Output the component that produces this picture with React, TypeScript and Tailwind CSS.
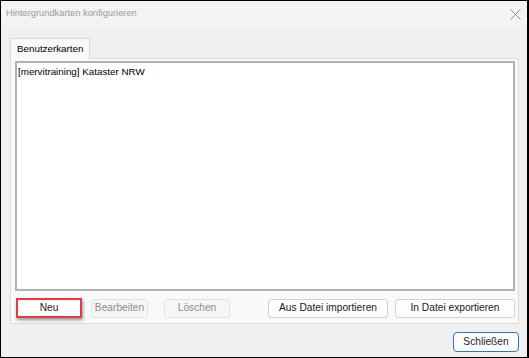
const font = { fontFamily: '"Liberation Sans", Arial, sans-serif' };

function Btn({
  label,
  w,
  disabled = false,
}: {
  label: string;
  w: string;
  disabled?: boolean;
}) {
  return (
    <div
      className={`${w} h-[19px] flex items-center justify-center rounded-[3px] border text-[10.2px] ${
        disabled
          ? "border-[#e2e2e2] bg-[#f6f6f6] text-[#8c8c8c]"
          : "border-[#d2d2d2] bg-[#fdfdfd] text-[#1b1b1b]"
      }`}
    >
      {label}
    </div>
  );
}

export default function App() {
  return (
    <div
      className="w-[529px] h-[358px] border border-black border-r-2 bg-[#f0f0f0] flex flex-col"
      style={font}
    >
      {/* title bar */}
      <div className="h-[26px] bg-[#f3f3f3] flex items-center justify-between pl-[5px] pr-[5px]">
        <span className="text-[9.3px] text-[#9b9b9b]">Hintergrundkarten konfigurieren</span>
        <svg width="11" height="11" viewBox="0 0 11 11" className="mr-[1px]">
          <path d="M0.5 0.5 L10.5 10.5 M10.5 0.5 L0.5 10.5" stroke="#8d8d8d" strokeWidth="1" />
        </svg>
      </div>

      {/* tab control */}
      <div className="pl-[9px] pt-[11px] pr-[8px]">
        <div className="relative z-10 -mb-px w-[80px] h-[21px] bg-[#f9f9f9] border border-b-0 border-[#d9d9d9] flex items-center pl-[6px] text-[9.8px] text-black">
          Benutzerkarten
        </div>
        <div className="h-[266px] border border-[#dcdcdc] bg-[#f9f9f9] pl-[4px] pr-[3px] pt-[2px] flex flex-col">
          <div className="h-[230px] bg-white border-2 border-[#b2b2b2] pl-[1px] pt-[2px] text-[9.8px] text-black leading-[13px]">
            [mervitraining] Kataster NRW
          </div>
          <div className="flex items-center mt-[7px] pl-[1px]">
            <div className="w-[66px] h-[20px] flex items-center justify-center border-2 border-[#e8393f] bg-white shadow-[1px_2px_3px_rgba(0,0,0,0.4)] text-[10.2px] text-[#1b1b1b]">
              Neu
            </div>
            <div className="ml-[9px]">
              <Btn label="Bearbeiten" w="w-[57px]" disabled />
            </div>
            <div className="ml-[16px]">
              <Btn label="Löschen" w="w-[66px]" disabled />
            </div>
            <div className="ml-auto">
              <Btn label="Aus Datei importieren" w="w-[120px]" />
            </div>
            <div className="ml-[7px]">
              <Btn label="In Datei exportieren" w="w-[120px]" />
            </div>
          </div>
        </div>
      </div>

      {/* footer */}
      <div className="flex justify-end pr-[8px] pt-[8px]">
        <div className="w-[66px] h-[20px] flex items-center justify-center rounded-[4px] border border-[#2a76c6] bg-[#fdfdfd] text-[10.2px] text-[#1b1b1b]">
          Schließen
        </div>
      </div>
    </div>
  );
}
